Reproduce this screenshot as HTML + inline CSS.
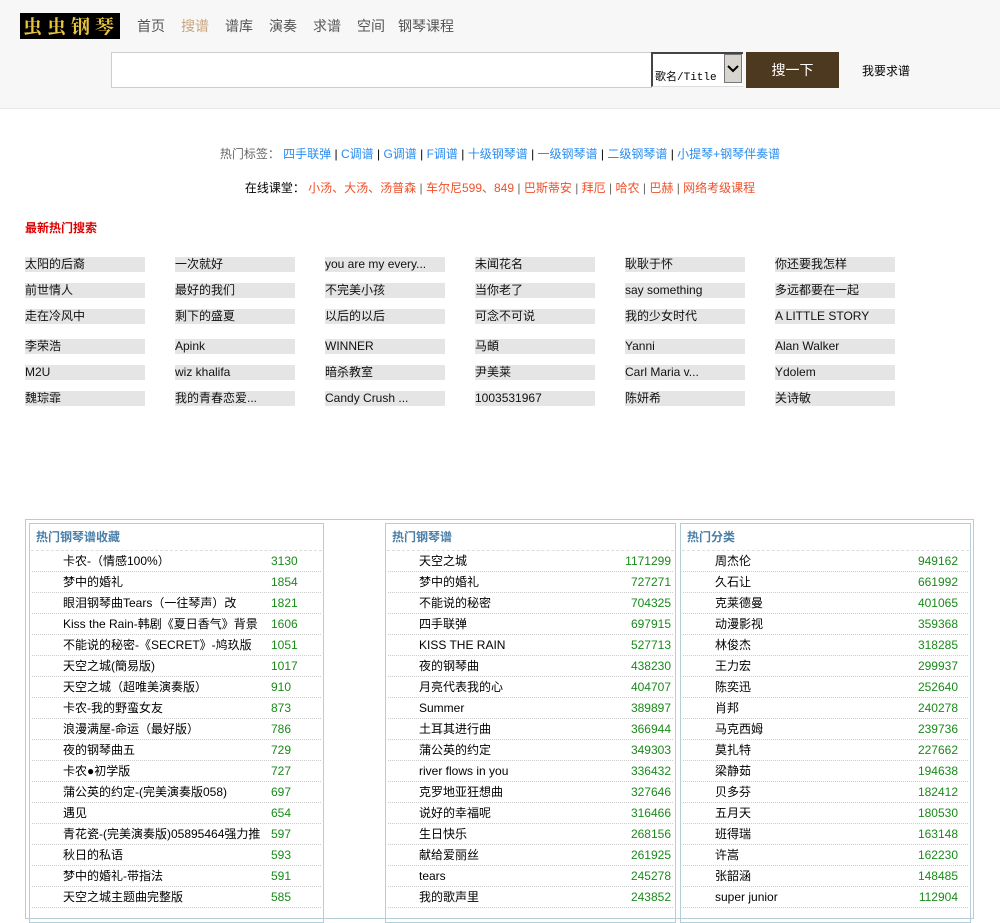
<!DOCTYPE html>
<html><head><meta charset="utf-8"><style>
*{margin:0;padding:0;box-sizing:border-box}
body{width:1000px;height:909px;overflow:hidden;background:#fff;font-family:"Liberation Sans","Noto Sans CJK SC",sans-serif;font-size:12px;color:#000;position:relative}
.hd{position:absolute;left:0;top:0;width:1000px;height:109px;background:#f7f7f7;border-bottom:1px solid #e8e8e8}
.logo{position:absolute;left:20px;top:13px;width:100px;height:26px;background:#000;color:#e8c53a;font-family:"Noto Serif CJK SC",serif;font-weight:bold;font-size:19px;letter-spacing:5px;line-height:26px;padding-left:3px}
.nav{position:absolute;top:16px;font-size:14px;color:#555}
.nav span{position:absolute;white-space:nowrap}
.inp{position:absolute;left:111px;top:52px;width:541px;height:36px;background:#fff;border:1px solid #ccc}
.sel{position:absolute;left:651px;top:52px;width:92px;height:35px;background:#fff;border:2px solid #444;border-right:none;border-bottom:1px solid #ddd;font-family:"Liberation Mono","Noto Sans CJK SC",monospace;font-size:11px;padding:14px 0 0 2px}
.sel i{position:absolute;right:1px;top:0;width:18px;height:29px;background:#d8d4ce;border:1px solid #777}
.btn{position:absolute;left:746px;top:52px;width:93px;height:36px;background:#4d3820;color:#fff;font-size:14px;text-align:center;line-height:36px}
.req{position:absolute;left:862px;top:62px;font-size:12px}
.tags{position:absolute;top:145px;width:1000px;text-align:center;font-size:12px}
.b{color:#2a8cf0}.r{color:#f0502a}.g{color:#666}
.ht{position:absolute;left:25px;top:219px;color:#d00;font-weight:bold;font-size:12px}
.k{position:absolute;width:120px;height:15px;background:#e5e5e5;font-size:12px;line-height:15px;white-space:nowrap;overflow:hidden;color:#111}
.outer{position:absolute;left:25px;top:519px;width:949px;height:400px;border:1px solid #b5cdd6}
.p{position:absolute;top:523px;height:400px;border:1px solid #b5cdd6}
.p h3{font-size:12px;color:#4a7fa8;font-weight:bold;height:27px;line-height:27px;padding-left:5px;border-bottom:1px dashed #ddd;margin:0 1px}
.p ul{list-style:none}
.p li{height:21px;line-height:20px;border-bottom:1px dotted #ccc;position:relative;font-size:12px;white-space:nowrap}
.p li b{font-weight:normal;position:absolute;color:#1a8a1a}
</style></head><body>
<div class="hd">
<div class="logo">虫虫钢琴</div>
<div class="nav">
<span style="left:137px">首页</span><span style="left:181px;color:#c9a47c">搜谱</span><span style="left:225px">谱库</span><span style="left:269px">演奏</span><span style="left:313px">求谱</span><span style="left:357px">空间</span><span style="left:398px">钢琴课程</span>
</div>
<div class="inp"></div>
<div class="sel">歌名/Title<i><svg width="16" height="28"><path d="M3 11l5 5 5-5" stroke="#000" stroke-width="2" fill="none"/></svg></i></div>
<div class="btn">搜一下</div>
<div class="req">我要求谱</div>
</div>
<div class="tags"><span class="g">热门标签：</span> <span class="b">四手联弹</span> | <span class="b">C调谱</span> | <span class="b">G调谱</span> | <span class="b">F调谱</span> | <span class="b">十级钢琴谱</span> | <span class="b">一级钢琴谱</span> | <span class="b">二级钢琴谱</span> | <span class="b">小提琴+钢琴伴奏谱</span></div>
<div class="tags" style="top:179px">在线课堂： <span class="r">小汤、大汤、汤普森</span> <span class="g">|</span> <span class="r">车尔尼599、849</span> <span class="g">|</span> <span class="r">巴斯蒂安</span> <span class="g">|</span> <span class="r">拜厄</span> <span class="g">|</span> <span class="r">哈农</span> <span class="g">|</span> <span class="r">巴赫</span> <span class="g">|</span> <span class="r">网络考级课程</span></div>
<div class="ht">最新热门搜索</div>

<div class="k" style="left:25px;top:257px">太阳的后裔</div><div class="k" style="left:175px;top:257px">一次就好</div><div class="k" style="left:325px;top:257px">you are my every...</div><div class="k" style="left:475px;top:257px">未闻花名</div><div class="k" style="left:625px;top:257px">耿耿于怀</div><div class="k" style="left:775px;top:257px">你还要我怎样</div>
<div class="k" style="left:25px;top:283px">前世情人</div><div class="k" style="left:175px;top:283px">最好的我们</div><div class="k" style="left:325px;top:283px">不完美小孩</div><div class="k" style="left:475px;top:283px">当你老了</div><div class="k" style="left:625px;top:283px">say something</div><div class="k" style="left:775px;top:283px">多远都要在一起</div>
<div class="k" style="left:25px;top:309px">走在冷风中</div><div class="k" style="left:175px;top:309px">剩下的盛夏</div><div class="k" style="left:325px;top:309px">以后的以后</div><div class="k" style="left:475px;top:309px">可念不可说</div><div class="k" style="left:625px;top:309px">我的少女时代</div><div class="k" style="left:775px;top:309px">A LITTLE STORY</div>
<div class="k" style="left:25px;top:339px">李荣浩</div><div class="k" style="left:175px;top:339px">Apink</div><div class="k" style="left:325px;top:339px">WINNER</div><div class="k" style="left:475px;top:339px">马頔</div><div class="k" style="left:625px;top:339px">Yanni</div><div class="k" style="left:775px;top:339px">Alan Walker</div>
<div class="k" style="left:25px;top:365px">M2U</div><div class="k" style="left:175px;top:365px">wiz khalifa</div><div class="k" style="left:325px;top:365px">暗杀教室</div><div class="k" style="left:475px;top:365px">尹美莱</div><div class="k" style="left:625px;top:365px">Carl Maria v...</div><div class="k" style="left:775px;top:365px">Ydolem</div>
<div class="k" style="left:25px;top:391px">魏琮霏</div><div class="k" style="left:175px;top:391px">我的青春恋爱...</div><div class="k" style="left:325px;top:391px">Candy Crush ...</div><div class="k" style="left:475px;top:391px">1003531967</div><div class="k" style="left:625px;top:391px">陈妍希</div><div class="k" style="left:775px;top:391px">关诗敏</div>

<div class="outer"></div>
<div class="p" style="left:29px;width:295px"><h3>热门钢琴谱收藏</h3><ul style="padding:0 2px">
<li style="padding-left:31px">卡农-（情感100%）<b style="left:239px">3130</b></li>
<li style="padding-left:31px">梦中的婚礼<b style="left:239px">1854</b></li>
<li style="padding-left:31px">眼泪钢琴曲Tears（一往琴声）改<b style="left:239px">1821</b></li>
<li style="padding-left:31px">Kiss the Rain-韩剧《夏日香气》背景<b style="left:239px">1606</b></li>
<li style="padding-left:31px">不能说的秘密-《SECRET》-鸠玖版<b style="left:239px">1051</b></li>
<li style="padding-left:31px">天空之城(簡易版)<b style="left:239px">1017</b></li>
<li style="padding-left:31px">天空之城（超唯美演奏版）<b style="left:239px">910</b></li>
<li style="padding-left:31px">卡农-我的野蛮女友<b style="left:239px">873</b></li>
<li style="padding-left:31px">浪漫满屋-命运（最好版）<b style="left:239px">786</b></li>
<li style="padding-left:31px">夜的钢琴曲五<b style="left:239px">729</b></li>
<li style="padding-left:31px">卡农●初学版<b style="left:239px">727</b></li>
<li style="padding-left:31px">蒲公英的约定-(完美演奏版058)<b style="left:239px">697</b></li>
<li style="padding-left:31px">遇见<b style="left:239px">654</b></li>
<li style="padding-left:31px">青花瓷-(完美演奏版)05895464强力推<b style="left:239px">597</b></li>
<li style="padding-left:31px">秋日的私语<b style="left:239px">593</b></li>
<li style="padding-left:31px">梦中的婚礼-带指法<b style="left:239px">591</b></li>
<li style="padding-left:31px">天空之城主题曲完整版<b style="left:239px">585</b></li>
</ul></div>
<div class="p" style="left:385px;width:291px"><h3>热门钢琴谱</h3><ul style="padding:0 2px">
<li style="padding-left:31px">天空之城<b style="right:2px">1171299</b></li>
<li style="padding-left:31px">梦中的婚礼<b style="right:2px">727271</b></li>
<li style="padding-left:31px">不能说的秘密<b style="right:2px">704325</b></li>
<li style="padding-left:31px">四手联弹<b style="right:2px">697915</b></li>
<li style="padding-left:31px">KISS THE RAIN<b style="right:2px">527713</b></li>
<li style="padding-left:31px">夜的钢琴曲<b style="right:2px">438230</b></li>
<li style="padding-left:31px">月亮代表我的心<b style="right:2px">404707</b></li>
<li style="padding-left:31px">Summer<b style="right:2px">389897</b></li>
<li style="padding-left:31px">土耳其进行曲<b style="right:2px">366944</b></li>
<li style="padding-left:31px">蒲公英的约定<b style="right:2px">349303</b></li>
<li style="padding-left:31px">river flows in you<b style="right:2px">336432</b></li>
<li style="padding-left:31px">克罗地亚狂想曲<b style="right:2px">327646</b></li>
<li style="padding-left:31px">说好的幸福呢<b style="right:2px">316466</b></li>
<li style="padding-left:31px">生日快乐<b style="right:2px">268156</b></li>
<li style="padding-left:31px">献给爱丽丝<b style="right:2px">261925</b></li>
<li style="padding-left:31px">tears<b style="right:2px">245278</b></li>
<li style="padding-left:31px">我的歌声里<b style="right:2px">243852</b></li>
</ul></div>
<div class="p" style="left:680px;width:291px"><h3>热门分类</h3><ul style="padding:0 2px">
<li style="padding-left:32px">周杰伦<b style="right:10px">949162</b></li>
<li style="padding-left:32px">久石让<b style="right:10px">661992</b></li>
<li style="padding-left:32px">克莱德曼<b style="right:10px">401065</b></li>
<li style="padding-left:32px">动漫影视<b style="right:10px">359368</b></li>
<li style="padding-left:32px">林俊杰<b style="right:10px">318285</b></li>
<li style="padding-left:32px">王力宏<b style="right:10px">299937</b></li>
<li style="padding-left:32px">陈奕迅<b style="right:10px">252640</b></li>
<li style="padding-left:32px">肖邦<b style="right:10px">240278</b></li>
<li style="padding-left:32px">马克西姆<b style="right:10px">239736</b></li>
<li style="padding-left:32px">莫扎特<b style="right:10px">227662</b></li>
<li style="padding-left:32px">梁静茹<b style="right:10px">194638</b></li>
<li style="padding-left:32px">贝多芬<b style="right:10px">182412</b></li>
<li style="padding-left:32px">五月天<b style="right:10px">180530</b></li>
<li style="padding-left:32px">班得瑞<b style="right:10px">163148</b></li>
<li style="padding-left:32px">许嵩<b style="right:10px">162230</b></li>
<li style="padding-left:32px">张韶涵<b style="right:10px">148485</b></li>
<li style="padding-left:32px">super junior<b style="right:10px">112904</b></li>
</ul></div>
</body></html>
